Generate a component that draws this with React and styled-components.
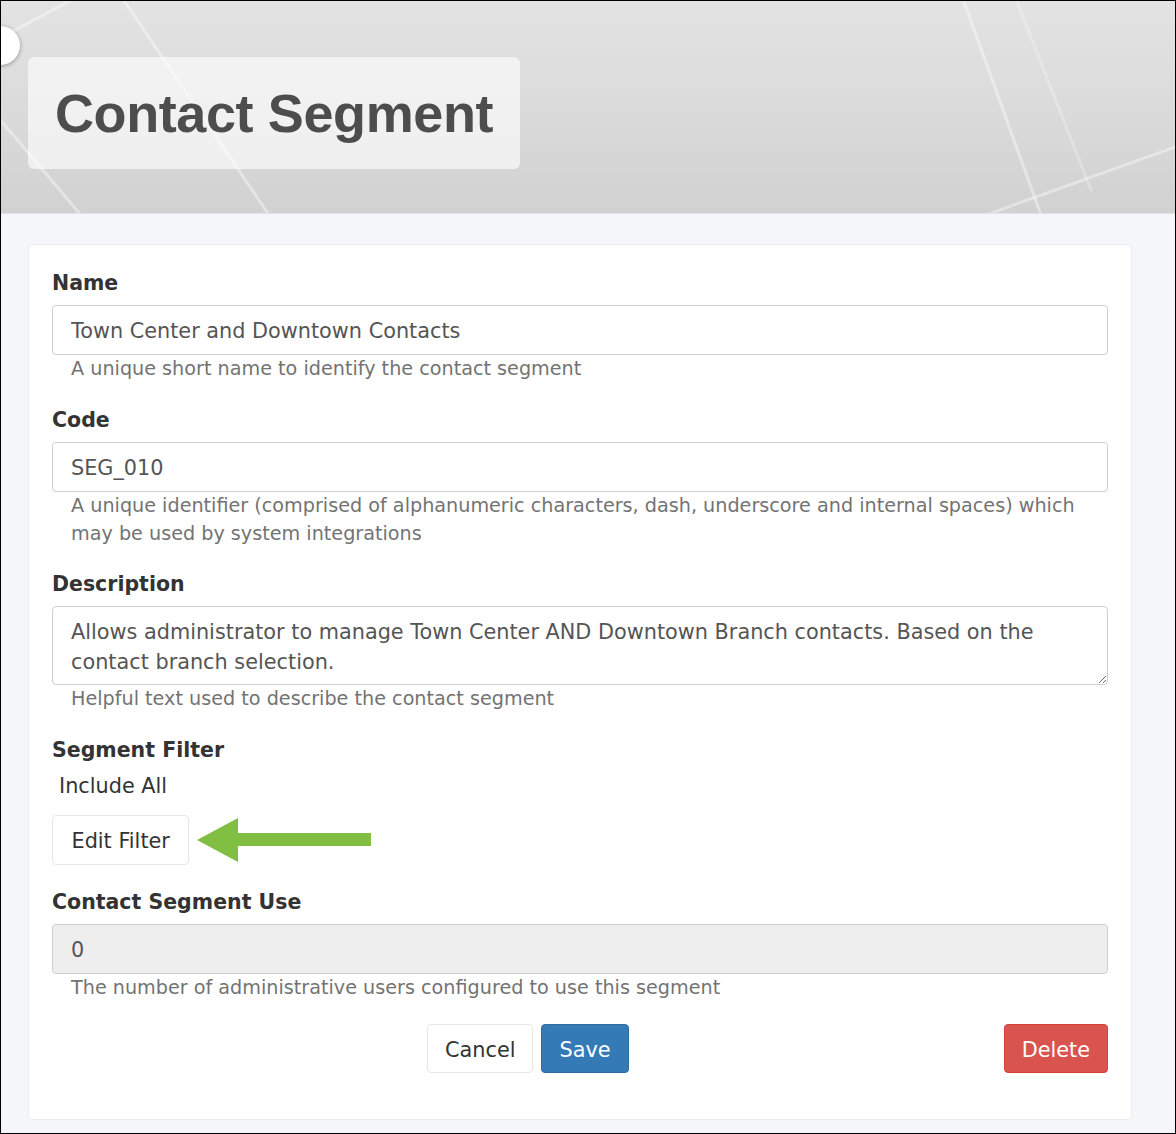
import React from "react";
import styled, { createGlobalStyle } from "styled-components";

const Global = createGlobalStyle`
  html, body { margin: 0; padding: 0; background: #fff; }
  * { box-sizing: border-box; }
`;

const Frame = styled.div`
  width: 1176px;
  height: 1134px;
  border: 1px solid #000;
  background: #f5f6fa;
  font-family: "DejaVu Sans", Verdana, sans-serif;
  overflow: hidden;
  position: relative;
`;

const Header = styled.header`
  position: relative;
  height: 213px;
  padding: 56px 0 0 27px;
  background: linear-gradient(180deg, #e3e3e3 0%, #dadada 55%, #d1d1d1 100%);
  border-bottom: 1px solid #dfe4ea;
  overflow: hidden;
`;

const Lines = styled.svg`
  position: absolute;
  inset: 0;
  width: 100%;
  height: 100%;
  pointer-events: none;
`;

const SideToggle = styled.div`
  position: absolute;
  left: -20px;
  top: 25px;
  width: 39px;
  height: 39px;
  border-radius: 50%;
  background: #fff;
  box-shadow: 0 1px 4px rgba(0, 0, 0, 0.35);
  z-index: 2;
`;

const TitleBox = styled.div`
  position: relative;
  display: inline-flex;
  align-items: center;
  width: 492px;
  height: 112px;
  padding-left: 27px;
  background: rgba(255, 255, 255, 0.62);
  border-radius: 6px;
`;

const Title = styled.h1`
  margin: 0;
  font-family: "Liberation Sans", Arial, sans-serif;
  font-weight: 700;
  font-size: 54px;
  letter-spacing: -0.4px;
  color: #4d4d4d;
  line-height: 1;
`;

const Main = styled.main`
  padding: 30px 43px 0 27px;
`;

const Card = styled.section`
  background: #fff;
  border: 1px solid #e9ecf0;
  border-radius: 5px;
  padding: 24px 23px 45px 23px;
  height: 876px;
`;

const Group = styled.div`
  margin-bottom: ${(p) => p.$mb ?? 22}px;
`;

const Label = styled.div`
  font-weight: 700;
  font-size: 20.5px;
  line-height: 28px;
  color: #333;
  margin-bottom: 8px;
`;

const Input = styled.input`
  display: block;
  width: 100%;
  height: 50px;
  padding: 2px 18px 0;
  border: 1px solid #cfcfcf;
  border-radius: 4px;
  font-family: "DejaVu Sans", Verdana, sans-serif;
  font-size: 20.8px;
  color: #555;
  background: ${(p) => (p.disabled ? "#eeeeee" : "#fff")};
  outline: none;
`;

const TextArea = styled.textarea`
  display: block;
  width: 100%;
  height: 79px;
  padding: 10px 18px 8px;
  border: 1px solid #cfcfcf;
  border-radius: 4px;
  font-family: "DejaVu Sans", Verdana, sans-serif;
  font-size: 20.8px;
  line-height: 30px;
  color: #555;
  resize: vertical;
  outline: none;
  overflow: hidden;
`;

const Help = styled.div`
  padding-left: 19px;
  font-size: 19.2px;
  line-height: 28px;
  color: #737373;
`;

const Plain = styled.div`
  padding-left: 7px;
  font-size: 20.8px;
  line-height: 28px;
  color: #333;
  margin-bottom: 15px;
`;

const FilterRow = styled.div`
  display: flex;
  align-items: center;
  gap: 8px;
`;

const Button = styled.button`
  height: ${(p) => p.$h ?? 49}px;
  padding: 2px ${(p) => p.$px ?? 17}px 0;
  border-radius: 4px;
  font-family: "DejaVu Sans", Verdana, sans-serif;
  font-size: 20.8px;
  cursor: pointer;
  ${(p) =>
    p.$variant === "primary"
      ? "background:#337ab7;border:1px solid #2e6da4;color:#fff;"
      : p.$variant === "danger"
      ? "background:#d9534f;border:1px solid #d43f3a;color:#fff;"
      : "background:#fff;border:1px solid #e6e6e6;color:#333;"}
`;

const Actions = styled.div`
  display: flex;
  align-items: center;
  gap: 8px;
  padding-left: 375px;
`;

const Spacer = styled.div`
  flex: 1;
`;

function Arrow() {
  return (
    <svg width="174" height="44" viewBox="0 0 174 44">
      <polygon
        points="0,22 41,0 41,15 174,15 174,28 41,28 41,44"
        fill="#80bf41"
      />
    </svg>
  );
}

export default function App() {
  return (
    <Frame>
      <Global />
      <SideToggle />
      <Header>
        <Lines viewBox="0 0 1174 213" preserveAspectRatio="none">
          <g stroke="#ffffff" strokeOpacity="0.4" strokeWidth="3" fill="none" strokeLinecap="round">
            <line x1="-2" y1="38" x2="72" y2="-2" />
            <line x1="122" y1="-2" x2="268" y2="215" />
            <line x1="-2" y1="118" x2="80" y2="215" />
            <line x1="962" y1="-2" x2="1040" y2="215" />
            <line x1="985" y1="215" x2="1176" y2="146" />
            <line x1="1015" y1="-2" x2="1090" y2="190" strokeOpacity="0.25" />
          </g>
        </Lines>
        <TitleBox>
          <Title>Contact Segment</Title>
        </TitleBox>
      </Header>
      <Main>
        <Card>
          <Group $mb={23}>
            <Label>Name</Label>
            <Input readOnly defaultValue="Town Center and Downtown Contacts" />
            <Help>A unique short name to identify the contact segment</Help>
          </Group>
          <Group $mb={22}>
            <Label>Code</Label>
            <Input readOnly defaultValue="SEG_010" />
            <Help>
              A unique identifier (comprised of alphanumeric characters, dash,
              underscore and internal spaces) which may be used by system
              integrations
            </Help>
          </Group>
          <Group $mb={23}>
            <Label>Description</Label>
            <TextArea
              readOnly
              defaultValue="Allows administrator to manage Town Center AND Downtown Branch contacts. Based on the contact branch selection."
            />
            <Help>Helpful text used to describe the contact segment</Help>
          </Group>
          <Group $mb={23}>
            <Label>Segment Filter</Label>
            <Plain>Include All</Plain>
            <FilterRow>
              <Button $h={50} $px={18.5}>Edit Filter</Button>
              <Arrow />
            </FilterRow>
          </Group>
          <Group $mb={22}>
            <Label>Contact Segment Use</Label>
            <Input disabled defaultValue="0" />
            <Help>The number of administrative users configured to use this segment</Help>
          </Group>
          <Actions>
            <Button>Cancel</Button>
            <Button $variant="primary">Save</Button>
            <Spacer />
            <Button $variant="danger">Delete</Button>
          </Actions>
        </Card>
      </Main>
    </Frame>
  );
}
